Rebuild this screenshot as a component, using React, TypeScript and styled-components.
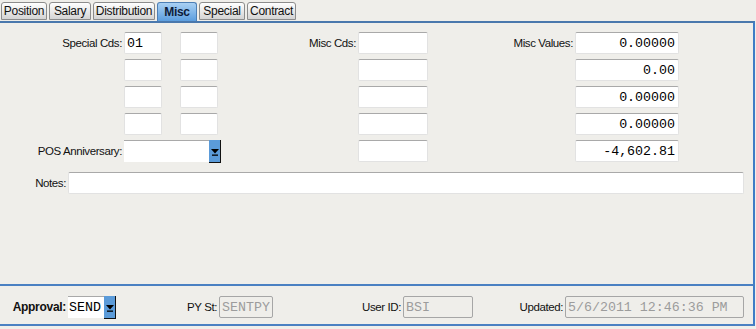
import React from "react";
import styled, { createGlobalStyle } from "styled-components";

const GlobalStyle = createGlobalStyle`
  html, body {
    margin: 0;
    padding: 0;
    background: #efeeea;
    font-family: "Liberation Sans", Arial, sans-serif;
  }
`;

const tabs = [
  { name: "Position", w: 46 },
  { name: "Salary", w: 42 },
  { name: "Distribution", w: 62 },
  { name: "Misc", w: 40 },
  { name: "Special", w: 46 },
  { name: "Contract", w: 49 },
];

const DropArrow: React.FC = () => (
  <svg width="8" height="7" viewBox="0 0 8 7">
    <polygon points="0,0 8,0 4,4.5" fill="#000" />
    <rect x="1" y="5.5" width="6" height="1.3" fill="#000" />
  </svg>
);

const App: React.FC = () => {
  const leftRows = [
    { label: "Special Cds:", a: "01", misc: "Misc Cds:", valLabel: "Misc Values:", val: "0.00000" },
    { label: "", a: "", misc: "", valLabel: "", val: "0.00" },
    { label: "", a: "", misc: "", valLabel: "", val: "0.00000" },
    { label: "", a: "", misc: "", valLabel: "", val: "0.00000" },
  ];

  return (
    <Page>
      <GlobalStyle />
      <TabBar>
        {tabs.map((t) => (
          <Tab key={t.name} $w={t.w} $active={t.name === "Misc"}>
            {t.name}
          </Tab>
        ))}
      </TabBar>

      <Panel>
        <FieldGrid>
          {leftRows.map((r, i) => (
            <React.Fragment key={i}>
              <Label>{r.label}</Label>
              <TextBox $w={38}>{r.a}</TextBox>
              <TextBox $w={38} />
              <Label>{r.misc}</Label>
              <TextBox $w={70} />
              <Label>{r.valLabel}</Label>
              <TextBox $w={104} $right>
                {r.val}
              </TextBox>
            </React.Fragment>
          ))}
          <Label>POS Anniversary:</Label>
          <SelectCell>
            <Select $w={97}>
              <SelectValue />
              <DropButton>
                <DropArrow />
              </DropButton>
            </Select>
          </SelectCell>
          <Label />
          <TextBox $w={70} />
          <Label />
          <TextBox $w={104} $right>
            -4,602.81
          </TextBox>
        </FieldGrid>

        <NotesRow>
          <NotesLabel>Notes:</NotesLabel>
          <TextBox $w={676} />
        </NotesRow>
      </Panel>

      <Footer>
        <FooterGrid>
          <Label $bold>Approval:</Label>
          <Select $w={48}>
            <SelectValue>SEND</SelectValue>
            <DropButton>
              <DropArrow />
            </DropButton>
          </Select>
          <Label>PY St:</Label>
          <TextBox $w={54} $disabled>
            SENTPY
          </TextBox>
          <Label>User ID:</Label>
          <TextBox $w={70} $disabled>
            BSI
          </TextBox>
          <Label>Updated:</Label>
          <TextBox $w={179} $disabled>
            5/6/2011 12:46:36 PM
          </TextBox>
        </FooterGrid>
      </Footer>
    </Page>
  );
};

export default App;

const Page = styled.div`
  width: 756px;
  height: 329px;
  overflow: hidden;
`;

const TabBar = styled.div`
  display: flex;
  align-items: flex-end;
  gap: 2px;
  height: 21px;
  padding-left: 1px;
  box-sizing: border-box;
`;

const Tab = styled.div<{ $active?: boolean; $w: number }>`
  width: ${(p) => p.$w}px;
  height: ${(p) => (p.$active ? "19px" : "18px")};
  margin-bottom: ${(p) => (p.$active ? "0" : "1px")};
  display: flex;
  align-items: center;
  justify-content: center;
  box-sizing: border-box;
  border: 1px solid ${(p) => (p.$active ? "#4d7fb5" : "#8c8c8c")};
  border-bottom: ${(p) => (p.$active ? "none" : "1px solid #8c8c8c")};
  border-radius: 3px 3px 0 0;
  background: ${(p) =>
    p.$active
      ? "linear-gradient(#a9d0f3, #5c9edf)"
      : "linear-gradient(#ffffff, #d4d4d4)"};
  color: ${(p) => (p.$active ? "#0d1c3a" : "#111")};
  font-size: 12px;
  font-weight: ${(p) => (p.$active ? 700 : 400)};
  letter-spacing: -0.3px;
  white-space: nowrap;
`;

const Panel = styled.div`
  height: 263px;
  box-sizing: border-box;
  border-top: 2px solid #4a78ad;
  border-right: 2px solid #3f7cc6;
  width: 755px;
  padding-top: 9px;
`;

const FieldGrid = styled.div`
  display: grid;
  grid-template-columns: 124px 56px 38px 140px 70px 147px 104px;
  grid-auto-rows: 22px;
  row-gap: 5px;
`;

const Label = styled.div<{ $bold?: boolean }>`
  display: flex;
  align-items: center;
  justify-content: flex-end;
  padding-right: 2px;
  font-size: ${(p) => (p.$bold ? "12px" : "11.5px")};
  font-weight: ${(p) => (p.$bold ? 700 : 400)};
  letter-spacing: ${(p) => (p.$bold ? "-0.3px" : "-0.4px")};
  color: #111;
  white-space: nowrap;
`;

const TextBox = styled.div<{ $w: number; $right?: boolean; $disabled?: boolean }>`
  width: ${(p) => p.$w}px;
  height: 22px;
  box-sizing: border-box;
  display: flex;
  align-items: center;
  justify-content: ${(p) => (p.$right ? "flex-end" : "flex-start")};
  padding: 0 3px 0 2px;
  background: ${(p) => (p.$disabled ? "transparent" : "#ffffff")};
  border: 1px solid ${(p) => (p.$disabled ? "#a6a6a6" : "#e2e2e2")};
  border-top-color: ${(p) => (p.$disabled ? "#a6a6a6" : "#a9a9a9")};
  border-radius: 2px;
  font-family: "Liberation Mono", "Courier New", monospace;
  font-size: 13.3px;
  color: ${(p) => (p.$disabled ? "#9c9c9c" : "#000")};
  white-space: nowrap;
  overflow: hidden;
`;

const SelectCell = styled.div`
  grid-column: span 2;
`;

const Select = styled.div<{ $w: number }>`
  width: ${(p) => p.$w}px;
  height: 22px;
  display: flex;
  box-sizing: border-box;
`;

const SelectValue = styled.div`
  flex: 1;
  background: #ffffff;
  border-top: 1px solid #a9a9a9;
  display: flex;
  align-items: center;
  padding-left: 1px;
  font-family: "Liberation Mono", "Courier New", monospace;
  font-size: 13.3px;
  color: #000;
`;

const DropButton = styled.div`
  width: 12px;
  height: 23px;
  box-sizing: border-box;
  background: #5b9bd9;
  border-right: 1px solid #111;
  border-bottom: 1px solid #111;
  display: flex;
  align-items: center;
  justify-content: center;
  padding-top: 2px;
`;

const NotesRow = styled.div`
  display: flex;
  margin-top: 10px;
  height: 22px;
`;

const NotesLabel = styled(Label)`
  width: 68px;
  box-sizing: border-box;
`;

const Footer = styled.div`
  width: 755px;
  height: 42px;
  box-sizing: border-box;
  border-top: 2px solid #4a80c2;
  border-bottom: 2px solid #4a80c2;
  border-right: 2px solid #3f7cc6;
  padding-top: 10px;
`;

const FooterGrid = styled.div`
  display: grid;
  grid-template-columns: 68px 48px 103px 54px 130px 70px 92px 179px;
  grid-auto-rows: 22px;
`;
